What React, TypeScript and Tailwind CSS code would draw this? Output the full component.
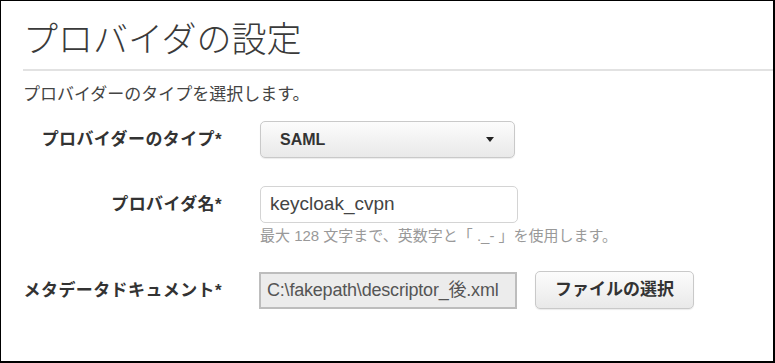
const jp = "font-['Liberation_Sans','Noto_Sans_CJK_JP',sans-serif]";

function Label({ text }: { text: string }) {
  return (
    <div className="w-[199px] h-[37px] flex items-center justify-end shrink-0">
      <span className="text-[17px] font-bold text-[#333] tracking-[0.4px]">{text}</span>
    </div>
  );
}

export default function App() {
  return (
    <div
      className={`w-[775px] h-[363px] bg-white border-black border-l border-t border-r-2 border-b-2 pl-[22px] overflow-hidden ${jp}`}
    >
      <div className="border-b-2 border-[#e2e2e2] pb-[9px]">
        <h1 className="mt-[19px] text-[35px] leading-[40px] font-light text-[#3a3a3a]">プロバイダの設定</h1>
      </div>

      <p className="mt-[12px] text-[17px] leading-[24px] text-[#444]">プロバイダーのタイプを選択します。</p>

      <div className="mt-[14px] flex items-start gap-[38px]">
        <Label text="プロバイダーのタイプ*" />
        <button
          type="button"
          className="w-[255px] h-[37px] rounded-[5px] border border-[#c9c9c9] bg-gradient-to-b from-[#fcfcfc] to-[#e9e9e9] shadow-[0_1px_1px_rgba(0,0,0,0.08)] flex items-center justify-between pl-[19px] pr-[20px]"
        >
          <span className="text-[16px] font-bold text-[#333]">SAML</span>
          <svg width="8" height="5" viewBox="0 0 8 5">
            <path d="M0 0h8L4 5z" fill="#222" />
          </svg>
        </button>
      </div>

      <div className="mt-[28px] flex items-start gap-[38px]">
        <Label text="プロバイダ名*" />
        <div className="flex flex-col">
          <div className="w-[258px] h-[37px] rounded-[5px] border border-[#d4d4d4] bg-white flex items-center pl-[9px]">
            <span className="text-[19px] text-[#444]">keycloak_cvpn</span>
          </div>
          <p className="mt-[4px] text-[15px] leading-[18px] text-[#999]">最大 128 文字まで、英数字と「 ._- 」を使用します。</p>
        </div>
      </div>

      <div className="mt-[27px] flex items-start gap-[37px]">
        <Label text="メタデータドキュメント*" />
        <div className="flex items-center gap-[18px]">
          <div className="w-[258px] h-[37px] border-2 border-[#bdbdbd] bg-[#ececec] flex items-center pl-[6px]">
            <span className="text-[18px] text-[#555] tracking-[-0.2px]">C:\fakepath\descriptor_後.xml</span>
          </div>
          <button
            type="button"
            className="w-[159px] h-[38px] -mt-[2px] rounded-[5px] border border-[#c9c9c9] bg-gradient-to-b from-[#fcfcfc] to-[#e9e9e9] shadow-[0_1px_1px_rgba(0,0,0,0.08)] text-[17px] font-bold text-[#333]"
          >
            ファイルの選択
          </button>
        </div>
      </div>
    </div>
  );
}
